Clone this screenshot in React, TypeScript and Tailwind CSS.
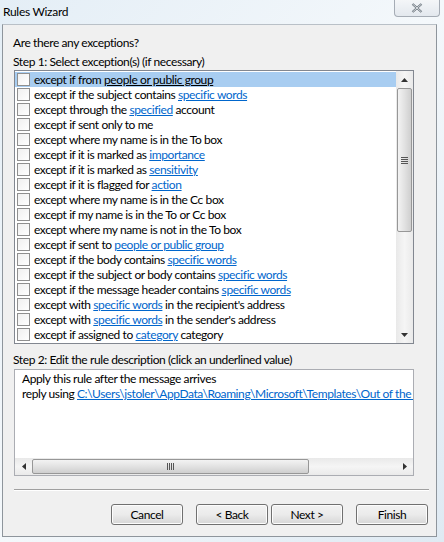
import React from "react";

type Part = { t: string; link?: boolean };

const rows: Part[][] = [
  [{ t: "except if from " }, { t: "people or public group", link: true }],
  [{ t: "except if the subject contains " }, { t: "specific words", link: true }],
  [{ t: "except through the " }, { t: "specified", link: true }, { t: " account" }],
  [{ t: "except if sent only to me" }],
  [{ t: "except where my name is in the To box" }],
  [{ t: "except if it is marked as " }, { t: "importance", link: true }],
  [{ t: "except if it is marked as " }, { t: "sensitivity", link: true }],
  [{ t: "except if it is flagged for " }, { t: "action", link: true }],
  [{ t: "except where my name is in the Cc box" }],
  [{ t: "except if my name is in the To or Cc box" }],
  [{ t: "except where my name is not in the To box" }],
  [{ t: "except if sent to " }, { t: "people or public group", link: true }],
  [{ t: "except if the body contains " }, { t: "specific words", link: true }],
  [{ t: "except if the subject or body contains " }, { t: "specific words", link: true }],
  [{ t: "except if the message header contains " }, { t: "specific words", link: true }],
  [{ t: "except with " }, { t: "specific words", link: true }, { t: " in the recipient's address" }],
  [{ t: "except with " }, { t: "specific words", link: true }, { t: " in the sender's address" }],
  [{ t: "except if assigned to " }, { t: "category", link: true }, { t: " category" }],
];

const font = { fontFamily: 'Lato, "Noto Sans", sans-serif' };

function Button({ label }: { label: string }) {
  return (
    <button className="h-[21px] w-[72px] rounded-[3px] border border-[#707070] bg-gradient-to-b from-[#f2f2f2] via-[#ebebeb] to-[#d6d6d6] text-[12px] leading-none tracking-[-0.4px] text-black shadow-[inset_0_0_0_1px_#fcfcfc]">
      {label}
    </button>
  );
}

export default function App() {
  return (
    <div
      className="relative h-[542px] w-[444px] overflow-hidden bg-gradient-to-br from-[#e4eef6] via-[#f4f8fb] to-[#dfeaf3] text-black"
      style={font}
    >
      {/* title bar */}
      <div className="flex h-[24px] items-start justify-between">
        <span className="pl-[3px] pt-[4px] text-[12px] leading-[16px] tracking-[-0.3px]">Rules Wizard</span>
        <div className="mr-[4px] flex h-[17px] w-[46px] items-center justify-center rounded-b-[4px] border border-t-0 border-[#a5acb5] bg-gradient-to-b from-[#f4f6f8] to-[#e3e8ee]">
          <svg width="12" height="10" viewBox="0 0 12 10">
            <path d="M1.5 1 L10.5 9 M10.5 1 L1.5 9" stroke="#eef1f4" strokeWidth="3.2" />
            <path d="M1.5 1 L10.5 9 M10.5 1 L1.5 9" stroke="#66707a" strokeWidth="2.2" />
            <path d="M1.5 1 L10.5 9 M10.5 1 L1.5 9" stroke="#f4f6f8" strokeWidth="0.8" />
          </svg>
        </div>
      </div>

      {/* client area */}
      <div className="ml-[2px] flex h-[513px] w-[435px] flex-col border border-[#8e959c] border-t-[#b9c0c7] bg-[#f0f0f0] text-[12px] tracking-[-0.4px]">
        <div className="ml-[10px] mt-[10px] leading-[16px]">Are there any exceptions?</div>
        <div className="ml-[10px] mt-[3px] leading-[16px]">Step 1: Select exception(s) (if necessary)</div>

        {/* exceptions list */}
        <div className="ml-[11px] flex h-[274px] w-[400px] border border-[#828790] bg-white">
          <div className="flex-1 pt-[1px]">
            {rows.map((parts, i) => (
              <div
                key={i}
                className={
                  "flex h-[15px] items-center whitespace-nowrap pl-[1px] " +
                  (i === 0 ? "bg-[#a8cdf1]" : "")
                }
              >
                <span className="ml-[1px] h-[13px] w-[13px] shrink-0 border border-[#8f8f8f] bg-gradient-to-br from-[#f0f0f0] to-white" />
                <span className="ml-[4px] leading-[15px]">
                  {parts.map((p, j) =>
                    p.link ? (
                      <span key={j} className={"underline " + (i === 0 ? "text-black" : "text-[#0066cc]")}>
                        {p.t}
                      </span>
                    ) : (
                      <span key={j}>{p.t}</span>
                    )
                  )}
                </span>
              </div>
            ))}
          </div>
          {/* vertical scrollbar */}
          <div className="flex w-[17px] shrink-0 flex-col bg-gradient-to-r from-[#e9e9e9] via-[#f5f5f5] to-[#eaeaea]">
            <div className="flex h-[17px] items-center justify-center">
              <svg width="7" height="4" viewBox="0 0 7 4">
                <path d="M3.5 0 L7 4 L0 4 Z" fill="#333" />
              </svg>
            </div>
            <div className="mx-[1px] flex h-[144px] items-center justify-center rounded-[2px] border border-[#979797] bg-gradient-to-r from-[#f3f3f3] via-[#e2e2e2] to-[#cfcfcf]">
              <div className="flex w-[7px] flex-col gap-[1px]">
                <div className="h-[1px] bg-[#555]" />
                <div className="h-[1px] bg-[#555]" />
                <div className="h-[1px] bg-[#555]" />
                <div className="h-[1px] bg-[#555]" />
              </div>
            </div>
            <div className="flex-1" />
            <div className="flex h-[17px] items-center justify-center">
              <svg width="7" height="4" viewBox="0 0 7 4">
                <path d="M0 0 L7 0 L3.5 4 Z" fill="#333" />
              </svg>
            </div>
          </div>
        </div>

        <div className="ml-[10px] mt-[8px] leading-[16px]">Step 2: Edit the rule description (click an underlined value)</div>

        {/* description box */}
        <div className="ml-[11px] mt-[1px] flex h-[107px] w-[400px] flex-col border border-[#abadb3] bg-white">
          <div className="flex-1 overflow-hidden whitespace-nowrap pl-[7px] pt-[1px] leading-[15px]">
            <div>Apply this rule after the message arrives</div>
            <div>
              reply using{" "}
              <span className="text-[#0066cc] underline">
                C:\Users\jstoler\AppData\Roaming\Microsoft\Templates\Out of the office.oft
              </span>
            </div>
          </div>
          {/* horizontal scrollbar */}
          <div className="flex h-[17px] shrink-0 items-center bg-gradient-to-b from-[#e9e9e9] via-[#f5f5f5] to-[#eaeaea]">
            <div className="flex w-[17px] items-center justify-center">
              <svg width="4" height="7" viewBox="0 0 4 7">
                <path d="M0 3.5 L4 0 L4 7 Z" fill="#333" />
              </svg>
            </div>
            <div className="flex h-[15px] w-[277px] items-center justify-center rounded-[2px] border border-[#979797] bg-gradient-to-b from-[#f3f3f3] via-[#e2e2e2] to-[#cfcfcf]">
              <div className="flex h-[7px] gap-[1px]">
                <div className="w-[1px] bg-[#555]" />
                <div className="w-[1px] bg-[#555]" />
                <div className="w-[1px] bg-[#555]" />
                <div className="w-[1px] bg-[#555]" />
              </div>
            </div>
            <div className="flex-1" />
            <div className="flex w-[17px] items-center justify-center">
              <svg width="4" height="7" viewBox="0 0 4 7">
                <path d="M0 0 L4 3.5 L0 7 Z" fill="#333" />
              </svg>
            </div>
          </div>
        </div>

        {/* separator */}
        <div className="ml-[11px] mt-[13px] h-[2px] w-[415px] border-t border-b border-t-[#a0a0a0] border-b-white" />

        {/* buttons */}
        <div className="ml-[108px] mt-[13px] flex">
          <Button label="Cancel" />
          <div className="ml-[13px] flex gap-[3px]">
            <Button label="< Back" />
            <Button label="Next >" />
          </div>
          <div className="ml-[13px]">
            <Button label="Finish" />
          </div>
        </div>
      </div>
    </div>
  );
}
